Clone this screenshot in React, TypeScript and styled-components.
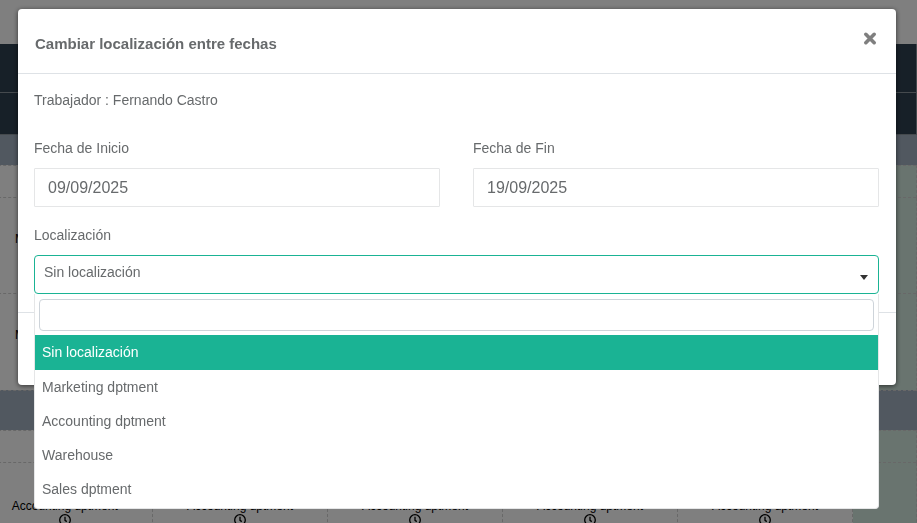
import React, { useState } from "react";
import styled, { createGlobalStyle } from "styled-components";

const Global = createGlobalStyle`
  *, *::before, *::after { box-sizing: border-box; }
  html, body { margin: 0; padding: 0; }
  body {
    font-family: "Liberation Sans", Arial, sans-serif;
    font-size: 14px;
    line-height: 20px;
    color: #676a6c;
    background: #fff;
  }
  button, input, select { font: inherit; color: inherit; }
`;

const Page = styled.div`
  height: 100vh;
  overflow: hidden;
  padding-top: 44px;
`;

const Schedule = styled.table`
  width: calc(100% + 23px);
  margin-left: -23px;
  table-layout: fixed;
  border-collapse: collapse;
  font-size: 12px;
  line-height: 14px;
  color: #000;
`;

const DayCol = styled.col`
  width: 175px;
`;

const HeadRow = styled.tr<{ $height: number }>`
  height: ${(p) => p.$height}px;
  background: #2f4050;
  border: 1px solid #8a949c;
  border-top: 0;
`;

const BandRow = styled.tr<{ $height: number }>`
  height: ${(p) => p.$height}px;
  background: #a2b0c0;
  border-bottom: 1px dashed #d0d0d0;
`;

const ShiftRow = styled.tr<{ $height: number }>`
  height: ${(p) => p.$height}px;
  border-bottom: 1px dashed #d0d0d0;
`;

const ShiftCell = styled.td<{ $weekend?: boolean }>`
  padding: 0;
  text-align: center;
  vertical-align: middle;
  border-right: 1px dashed #d0d0d0;
  background: ${(p) => (p.$weekend ? "#d2e8de" : "transparent")};
`;

const Clock = styled.svg`
  display: block;
  width: 12px;
  height: 12px;
  margin: 1px auto 0;
`;

const Backdrop = styled.div`
  position: fixed;
  inset: 0;
  padding: 9px 21px 0 18px;
  background: rgba(0, 0, 0, 0.5);
`;

const Dialog = styled.section`
  background: #fff;
  border-radius: 4px;
  box-shadow: 0 1px 5px rgba(0, 0, 0, 0.6);
`;

const DialogHeader = styled.header`
  display: flex;
  align-items: flex-start;
  justify-content: space-between;
  padding: 22px 19px 17px 17px;
  border-bottom: 1px solid #dee2e6;
`;

const Title = styled.h2`
  margin: 0;
  padding-top: 1px;
  font-size: 15px;
  line-height: 24px;
  font-weight: 700;
`;

const CloseButton = styled.button`
  display: flex;
  padding: 0;
  border: 0;
  background: none;
  cursor: pointer;
`;

const DialogBody = styled.div`
  padding: 16px 17px 18px 16px;
`;

const Worker = styled.p`
  margin: 0 0 28px;
`;

const Fields = styled.div`
  display: grid;
  grid-template-columns: 1fr 1fr;
  column-gap: 33px;
  row-gap: 18px;
`;

const Field = styled.div<{ $wide?: boolean }>`
  position: relative;
  grid-column: ${(p) => (p.$wide ? "1 / -1" : "auto")};
`;

const Label = styled.label`
  display: block;
  margin-bottom: 10px;
`;

const DateInput = styled.input`
  display: block;
  width: 100%;
  height: 39px;
  padding: 0 13px;
  border: 1px solid #e5e6e7;
  border-radius: 1px;
  background: #fff;
  font-size: 16px;
`;

const SelectBox = styled.div`
  position: relative;
`;

const LocationSelect = styled.select`
  display: block;
  width: 100%;
  height: 39px;
  padding: 0 30px 6px 9px;
  border: 1px solid #1ab394;
  border-radius: 4px;
  outline: none;
  appearance: none;
  background: #fff;
`;

const Caret = styled.svg`
  position: absolute;
  right: 11px;
  bottom: 14px;
  width: 8px;
  height: 5px;
  pointer-events: none;
`;

const Dropdown = styled.div`
  position: absolute;
  top: 100%;
  left: 0;
  right: 0;
  border: 1px solid #e5e6e7;
  border-top: 0;
  border-radius: 0 0 4px 4px;
  background: #fff;
`;

const SearchBox = styled.div`
  padding: 5px 4px 4px;
`;

const SearchInput = styled.input`
  display: block;
  width: 100%;
  height: 32px;
  padding: 0 8px;
  border: 1px solid #ced4da;
  border-radius: 4px;
  outline: none;
`;

const Options = styled.ul`
  margin: 0;
  padding: 0 0 2px;
  list-style: none;
`;

const Option = styled.li<{ $active: boolean }>`
  padding: ${(p) => (p.$active ? "7px 7px 8px" : "7px")};
  color: ${(p) => (p.$active ? "#fff" : "inherit")};
  background: ${(p) => (p.$active ? "#1ab394" : "transparent")};
  cursor: pointer;
`;

const DialogFooter = styled.footer`
  height: 73px;
  border-top: 1px solid #dee2e6;
`;

const LOCATIONS = [
  "Sin localización",
  "Marketing dptment",
  "Accounting dptment",
  "Warehouse",
  "Sales dptment",
];

const DAYS = [0, 1, 2, 3, 4];

function ShiftCells({ place, only }: { place?: string; only?: number }) {
  return (
    <>
      {DAYS.map((day) => (
        <ShiftCell key={day}>
          {place && (only === undefined || only === day) && (
            <>
              {place}
              <Clock viewBox="0 0 12 12" fill="none" stroke="#000" strokeWidth="1.3" aria-hidden="true">
                <circle cx="6" cy="6" r="5.3" />
                <path d="M6 2.8V6.3L7.8 7.6" />
              </Clock>
            </>
          )}
        </ShiftCell>
      ))}
      <ShiftCell $weekend />
    </>
  );
}

export default function App() {
  const [location, setLocation] = useState(LOCATIONS[0]);
  const [start, setStart] = useState("09/09/2025");
  const [end, setEnd] = useState("19/09/2025");

  return (
    <>
      <Global />
      <Page>
        <Schedule aria-hidden="true">
          <colgroup>
            {DAYS.map((day) => (
              <DayCol key={day} />
            ))}
            <col />
          </colgroup>
          <tbody>
            <HeadRow $height={48}><td colSpan={6} /></HeadRow>
            <HeadRow $height={42}><td colSpan={6} /></HeadRow>
            <BandRow $height={31}><td colSpan={6} /></BandRow>
            <ShiftRow $height={32}><ShiftCells /></ShiftRow>
            <ShiftRow $height={96}><ShiftCells place="Marketing dptment" only={0} /></ShiftRow>
            <ShiftRow $height={97}><ShiftCells place="Marketing dptment" only={0} /></ShiftRow>
            <BandRow $height={40}><td colSpan={6} /></BandRow>
            <ShiftRow $height={32}><ShiftCells /></ShiftRow>
            <ShiftRow $height={100}><ShiftCells place="Accounting dptment" /></ShiftRow>
          </tbody>
        </Schedule>
      </Page>

      <Backdrop>
        <Dialog role="dialog" aria-modal="true" aria-labelledby="dialog-title">
          <DialogHeader>
            <Title id="dialog-title">Cambiar localización entre fechas</Title>
            <CloseButton type="button" aria-label="Cerrar">
              <svg width="14" height="15" viewBox="0 0 14 15" stroke="#7f7f7f" strokeWidth="3.6" strokeLinecap="round" aria-hidden="true">
                <path d="M2.8 3.3L11.2 11.7M11.2 3.3L2.8 11.7" />
              </svg>
            </CloseButton>
          </DialogHeader>

          <DialogBody>
            <Worker>Trabajador : Fernando Castro</Worker>
            <Fields>
              <Field>
                <Label htmlFor="start">Fecha de Inicio</Label>
                <DateInput id="start" value={start} onChange={(e) => setStart(e.target.value)} />
              </Field>
              <Field>
                <Label htmlFor="end">Fecha de Fin</Label>
                <DateInput id="end" value={end} onChange={(e) => setEnd(e.target.value)} />
              </Field>
              <Field $wide>
                <Label htmlFor="location">Localización</Label>
                <SelectBox>
                  <LocationSelect id="location" value={location} onChange={(e) => setLocation(e.target.value)}>
                    {LOCATIONS.map((name) => (
                      <option key={name}>{name}</option>
                    ))}
                  </LocationSelect>
                  <Caret viewBox="0 0 8 5" fill="#333" aria-hidden="true">
                    <path d="M0 0H8L4 5Z" />
                  </Caret>
                </SelectBox>
                <Dropdown>
                  <SearchBox>
                    <SearchInput type="search" aria-label="Buscar localización" />
                  </SearchBox>
                  <Options role="listbox" aria-label="Localización">
                    {LOCATIONS.map((name) => (
                      <Option
                        key={name}
                        role="option"
                        aria-selected={name === location}
                        $active={name === location}
                        onClick={() => setLocation(name)}
                      >
                        {name}
                      </Option>
                    ))}
                  </Options>
                </Dropdown>
              </Field>
            </Fields>
          </DialogBody>
          <DialogFooter />
        </Dialog>
      </Backdrop>
    </>
  );
}
